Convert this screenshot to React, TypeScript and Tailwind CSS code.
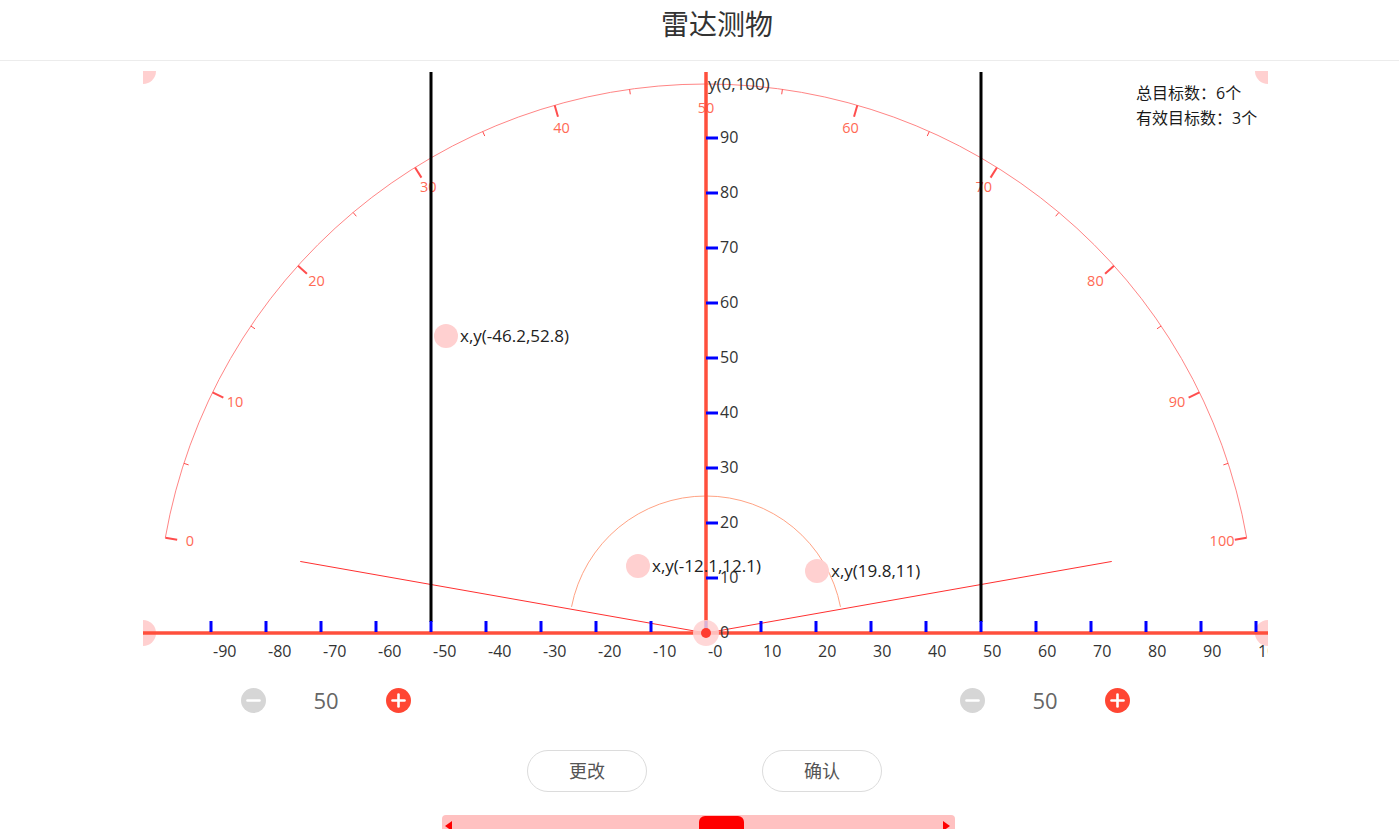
import React from 'react';

const CX = 706;
const CY = 633;
const R = 549;

const pt = (deg: number, r: number) => {
  const a = (deg * Math.PI) / 180;
  return { x: CX + r * Math.cos(a), y: CY - r * Math.sin(a) };
};

const targets = [
  { x: 446, y: 336, label: 'x,y(-46.2,52.8)' },
  { x: 638, y: 566, label: 'x,y(-12.1,12.1)' },
  { x: 817, y: 571, label: 'x,y(19.8,11)' },
];

function RadarChart() {
  const gaugeTicks = [];
  for (let v = 0; v <= 100; v += 5) {
    const deg = 170 - v * 1.6;
    const major = v % 10 === 0;
    const a = pt(deg, R);
    const b = pt(deg, major ? R - 12 : R - 5);
    gaugeTicks.push(
      <line
        key={'t' + v}
        x1={a.x}
        y1={a.y}
        x2={b.x}
        y2={b.y}
        stroke="#ff4d4d"
        strokeWidth={major ? 2 : 1}
      />
    );
    if (major) {
      const l = pt(deg, R - 25);
      gaugeTicks.push(
        <text
          key={'l' + v}
          x={l.x}
          y={l.y}
          textAnchor="middle"
          dominantBaseline="middle"
          fontSize="14.5"
          fill="#ff6a55"
        >
          {v}
        </text>
      );
    }
  }

  const s = pt(170, R);
  const e = pt(10, R);
  const ss = pt(169, 137);
  const se = pt(11, 137);
  const la = pt(170, 412);
  const ra = pt(10, 412);

  const xTicks = [];
  for (let k = -9; k <= 10; k++) {
    const x = CX + 55 * k;
    const label = k < 0 ? `-${-k * 10}` : k === 0 ? '-0' : `${k * 10}`;
    xTicks.push(
      <g key={'x' + k}>
        <line x1={x} y1={621} x2={x} y2={632} stroke="#0000ff" strokeWidth={3} />
        <text x={x + 2} y={653} dominantBaseline="middle" fontSize="16" fill="#333">
          {label}
        </text>
      </g>
    );
  }

  const yTicks = [];
  for (let k = 0; k <= 9; k++) {
    const y = CY - 55 * k;
    yTicks.push(
      <g key={'y' + k}>
        {k > 0 && <line x1={CX} y1={y} x2={718} y2={y} stroke="#0000ff" strokeWidth={3} />}
        <text x={720} y={y + 1} dominantBaseline="middle" fontSize="16" fill="#333">
          {k * 10}
        </text>
      </g>
    );
  }

  return (
    <svg width="1399" height="619" className="block">
      <defs>
        <clipPath id="grid">
          <rect x="143" y="71" width="1125" height="610" />
        </clipPath>
      </defs>
      <g transform="translate(0,-61)" clipPath="url(#grid)">
        {/* gauge */}
        <path
          d={`M ${s.x} ${s.y} A ${R} ${R} 0 0 1 ${e.x} ${e.y}`}
          fill="none"
          stroke="#ff8585"
          strokeWidth={1}
        />
        {gaugeTicks}

        {/* inner range */}
        <path
          d={`M ${ss.x} ${ss.y} A 137 137 0 0 1 ${se.x} ${se.y}`}
          fill="none"
          stroke="#ffa384"
          strokeWidth={1}
        />
        <line x1={CX} y1={CY} x2={la.x} y2={la.y} stroke="#ff3030" strokeWidth={1} />
        <line x1={CX} y1={CY} x2={ra.x} y2={ra.y} stroke="#ff3030" strokeWidth={1} />

        {/* limits */}
        <line x1={431} y1={72} x2={431} y2={622} stroke="#000" strokeWidth={3} />
        <line x1={981} y1={72} x2={981} y2={622} stroke="#000" strokeWidth={3} />

        {/* corner markers */}
        {[
          [143, 71],
          [1268, 71],
          [143, 633],
          [1268, 633],
        ].map(([x, y]) => (
          <circle key={`${x}-${y}`} cx={x} cy={y} r={13} fill="#ffd0d0" />
        ))}

        {/* axes */}
        <line x1={143} y1={CY} x2={1268} y2={CY} stroke="#ff4f3c" strokeWidth={3.5} />
        <line x1={CX} y1={72} x2={CX} y2={CY} stroke="#ff4f3c" strokeWidth={3.5} />
        {xTicks}
        {yTicks}
        <text x={708} y={85} dominantBaseline="middle" fontSize="17" fill="#333">
          y(0,100)
        </text>

        {/* origin */}
        <circle cx={CX} cy={CY} r={13} fill="#ffd0d0" fillOpacity={0.85} />
        <circle cx={CX} cy={CY} r={5} fill="#ff3b2f" />

        {/* targets */}
        {targets.map((t) => (
          <g key={t.label}>
            <circle cx={t.x} cy={t.y} r={12} fill="#ffd0d0" />
            <text x={t.x + 14} y={t.y + 1} dominantBaseline="middle" fontSize="17" fill="#222">
              {t.label}
            </text>
          </g>
        ))}

        <text x={1136} y={95} dominantBaseline="middle" fontSize="16" fill="#1a1a1a">
          总目标数：6个
        </text>
        <text x={1136} y={120} dominantBaseline="middle" fontSize="16" fill="#1a1a1a">
          有效目标数：3个
        </text>
      </g>
    </svg>
  );
}

function RoundIcon({ plus, color }: { plus?: boolean; color: string }) {
  return (
    <svg width="25" height="25" viewBox="0 0 25 25">
      <circle cx="12.5" cy="12.5" r="12.5" fill={color} />
      <line x1="6.5" y1="12.5" x2="18.5" y2="12.5" stroke="#fff" strokeWidth="2.6" strokeLinecap="round" />
      {plus && (
        <line x1="12.5" y1="6.5" x2="12.5" y2="18.5" stroke="#fff" strokeWidth="2.6" strokeLinecap="round" />
      )}
    </svg>
  );
}

function Stepper() {
  return (
    <div className="flex w-[170px] items-center justify-between">
      <RoundIcon color="#d6d6d6" />
      <span className="text-[22px] leading-none text-[#666]">50</span>
      <RoundIcon plus color="#ff4633" />
    </div>
  );
}

export default function App() {
  return (
    <div className="h-[829px] w-[1399px] overflow-hidden bg-white font-['Open_Sans','Noto_Sans_CJK_SC',sans-serif]">
      <div className="flex h-[61px] justify-center border-b border-[#ececec] pl-[35px] pt-[5px]">
        <h1 className="text-[28px] leading-[38px] text-[#333]">雷达测物</h1>
      </div>

      <RadarChart />

      <div className="flex h-10 items-center pl-[241px]">
        <Stepper />
        <div className="ml-[549px]">
          <Stepper />
        </div>
      </div>

      <div className="mt-[30px] flex gap-[115px] pl-[527px]">
        <button className="h-[42px] w-[120px] rounded-full border border-[#dcdcdc] text-[18px] text-[#555]">
          更改
        </button>
        <button className="h-[42px] w-[120px] rounded-full border border-[#dcdcdc] text-[18px] text-[#555]">
          确认
        </button>
      </div>

      <div className="ml-[442px] mt-[23px] flex h-[22px] w-[513px] items-center rounded-sm bg-[#ffc1c1]">
        <span className="ml-[3px] h-0 w-0 border-y-[5px] border-r-[7px] border-y-transparent border-r-[#ff0000]" />
        <span className="ml-[247px] h-[20px] w-[45px] rounded-md bg-[#ff0000]" />
        <span className="ml-auto mr-[5px] h-0 w-0 border-y-[5px] border-l-[7px] border-y-transparent border-l-[#ff0000]" />
      </div>
    </div>
  );
}
